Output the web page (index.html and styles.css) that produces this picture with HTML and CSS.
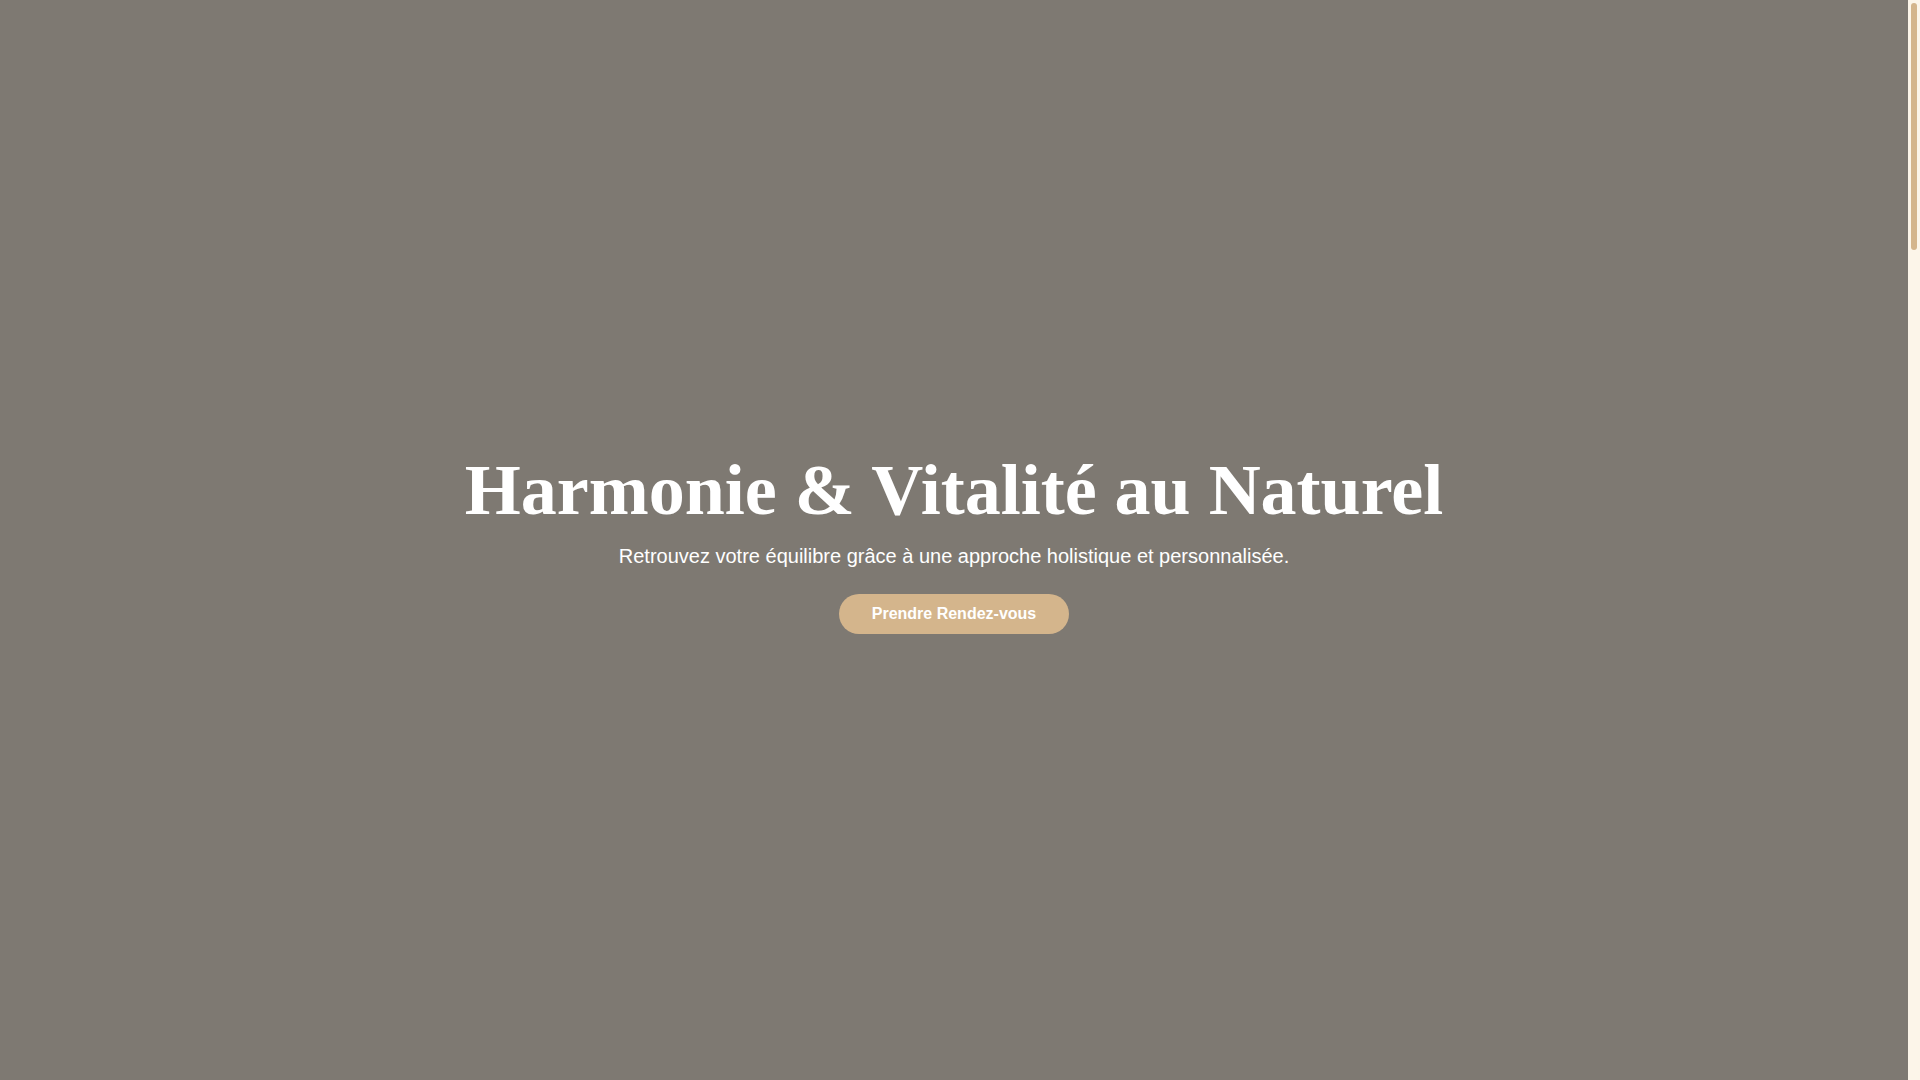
FILE: index.html
```html
<!DOCTYPE html>
<html lang="fr">
<head>
<meta charset="utf-8">
<title>Harmonie &amp; Vitalité au Naturel</title>
<link rel="stylesheet" href="styles.css">
</head>
<body>
  <header class="hero">
    <div class="hero-content">
      <h1 class="hero-title">Harmonie &amp; Vitalité au Naturel</h1>
      <p class="hero-subtitle">Retrouvez votre équilibre grâce à une approche holistique et personnalisée.</p>
      <a class="hero-button" href="#rendez-vous">Prendre Rendez-vous</a>
    </div>
  </header>
  <main class="page-rest">
    <section class="block" id="rendez-vous"></section>
  </main>
  <div class="scroll-indicator" aria-hidden="true"><div class="scroll-thumb"></div></div>
</body>
</html>
```

FILE: styles.css
```css
html {
  background: #fcf5e9;
  scrollbar-width: none;
}

::-webkit-scrollbar {
  width: 0;
}

body {
  margin: 0 12px 0 0;
  font-family: "Liberation Sans", Arial, sans-serif;
  background: #fcf5e9;
}

.hero {
  height: 100vh;
  background: #7e7972;
  display: flex;
  align-items: center;
  justify-content: center;
  text-align: center;
  color: #ffffff;
}

.hero-content {
  display: flex;
  flex-direction: column;
  align-items: center;
}

.hero-title {
  margin: 0 0 7px;
  font-family: "Liberation Serif", "Times New Roman", serif;
  font-weight: 700;
  font-size: 72px;
  line-height: 86px;
  color: #ffffff;
}

.hero-subtitle {
  margin: 0 0 22px;
  font-size: 20px;
  line-height: 32px;
  color: #ffffff;
}

.hero-button {
  display: inline-block;
  padding: 12px 33px;
  font-size: 16px;
  line-height: 16px;
  font-weight: 700;
  color: #ffffff;
  background: #d4b58c;
  border-radius: 999px;
  text-decoration: none;
}

.page-rest {
  background: #fcf5e9;
}

.block {
  height: 3530px;
}

.scroll-indicator {
  position: fixed;
  top: 0;
  right: 0;
  width: 12px;
  height: 100vh;
  background: #fcf5e9;
  padding: 3px;
  box-sizing: border-box;
}

.scroll-thumb {
  height: 247px;
  background: #d4b58c;
  border-radius: 3px;
}
```
